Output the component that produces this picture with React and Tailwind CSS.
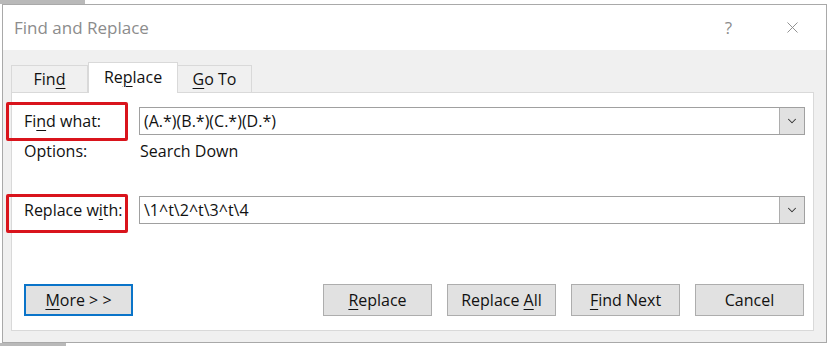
import { ChevronDown, X } from "lucide-react";

const font = { fontFamily: '"Open Sans", "Noto Sans", Arial, sans-serif' };

function U({ children }) {
  return <span className="underline underline-offset-[3px] decoration-1">{children}</span>;
}

function Combo({ value }) {
  return (
    <div className="flex-1 h-[28px] flex border border-[#a0a0a0] bg-white">
      <div className="flex-1 flex items-center pl-[4px] text-[16px] text-[#111]">{value}</div>
      <div className="w-[25px] flex items-center justify-center bg-[#e1e1e1] border-l border-[#adadad]">
        <ChevronDown className="w-[14px] h-[14px] text-[#333]" strokeWidth={1.8} />
      </div>
    </div>
  );
}

function Btn({ children, primary }) {
  return (
    <button
      className={
        "h-[32px] w-[109px] flex items-center justify-center text-[16px] text-[#111] bg-[#e1e1e1] " +
        (primary ? "border-2 border-[#0a74c9]" : "border border-[#adadad]")
      }
    >
      {children}
    </button>
  );
}

function Marked({ children, top }) {
  return (
    <div className="relative w-[127px] h-[20px] shrink-0 flex items-center pl-[12px] text-[16px] text-[#111]">
      {children}
      {/* red annotation box */}
      <div
        className={
          "absolute left-[-6px] right-[11px] border-[3px] border-[#d9141c] rounded-[2px] " +
          (top ? "top-[-9px] bottom-[-10px]" : "top-[-6px] bottom-[-13px]")
        }
      />
    </div>
  );
}

export default function App() {
  return (
    <div className="w-[828px] h-[346px] bg-white relative overflow-hidden" style={font}>
      <div className="absolute left-0 top-0 w-[85px] h-[4px] bg-[#b9b9b9]" />
      <div className="absolute left-0 bottom-0 w-[66px] h-[3px] bg-[#b9b9b9]" />
      <div className="ml-[2px] mr-[1px] mt-[4px] h-[339px] border border-[#a9a9a9] flex flex-col bg-[#f0f0f0]">
        {/* title bar */}
        <div className="h-[45px] bg-white flex items-center pl-[11px] pr-[24px] shrink-0">
          <div className="text-[17px] text-[#8c8c8c] flex-1">Find and Replace</div>
          <div className="text-[17px] text-[#8c8c8c] mr-[51px]">?</div>
          <X className="w-[19px] h-[19px] text-[#8c8c8c]" strokeWidth={1.2} />
        </div>
        {/* body */}
        <div className="flex-1 flex flex-col pl-[8px] pr-[12px] pt-[12px]">
          <div className="flex items-end h-[30px]">
            <div className="w-[77px] h-[27px] border border-b-0 border-[#d9d9d9] flex items-center justify-center text-[16px] text-[#111] bg-[#f0f0f0]">
              <span>Fin<U>d</U></span>
            </div>
            <div className="w-[90px] h-[31px] border border-b-0 border-[#d9d9d9] bg-white flex items-center justify-center text-[16px] text-[#111] -mb-px relative z-10 pb-[3px]">
              <span>Re<U>p</U>lace</span>
            </div>
            <div className="w-[74px] h-[27px] border border-b-0 border-l-0 border-[#d9d9d9] flex items-center justify-center text-[16px] text-[#111]">
              <span><U>G</U>o To</span>
            </div>
          </div>
          <div className="h-[239px] bg-white border border-[#d9d9d9] flex flex-col pt-[14px] pr-[8px]">
            <div className="flex items-center">
              <Marked top>Fi<U>n</U>d what:</Marked>
              <Combo value="(A.*)(B.*)(C.*)(D.*)" />
            </div>
            <div className="flex items-center h-[20px] mt-[6px] text-[16px] text-[#111]">
              <div className="w-[127px] pl-[12px]">Options:</div>
              <div className="pl-[1px]">Search Down</div>
            </div>
            <div className="flex items-center mt-[35px]">
              <Marked>Replace w<U>i</U>th:</Marked>
              <Combo value="\1^t\2^t\3^t\4" />
            </div>
            <div className="flex items-center mt-[60px] pl-[12px]">
              <Btn primary><span><U>M</U>ore &gt; &gt;</span></Btn>
              <div className="flex-1" />
              <div className="flex gap-[15px] mr-[1px]">
                <Btn><span><U>R</U>eplace</span></Btn>
                <Btn><span>Replace <U>A</U>ll</span></Btn>
                <Btn><span><U>F</U>ind Next</span></Btn>
                <Btn>Cancel</Btn>
              </div>
            </div>
          </div>
        </div>
      </div>
    </div>
  );
}
